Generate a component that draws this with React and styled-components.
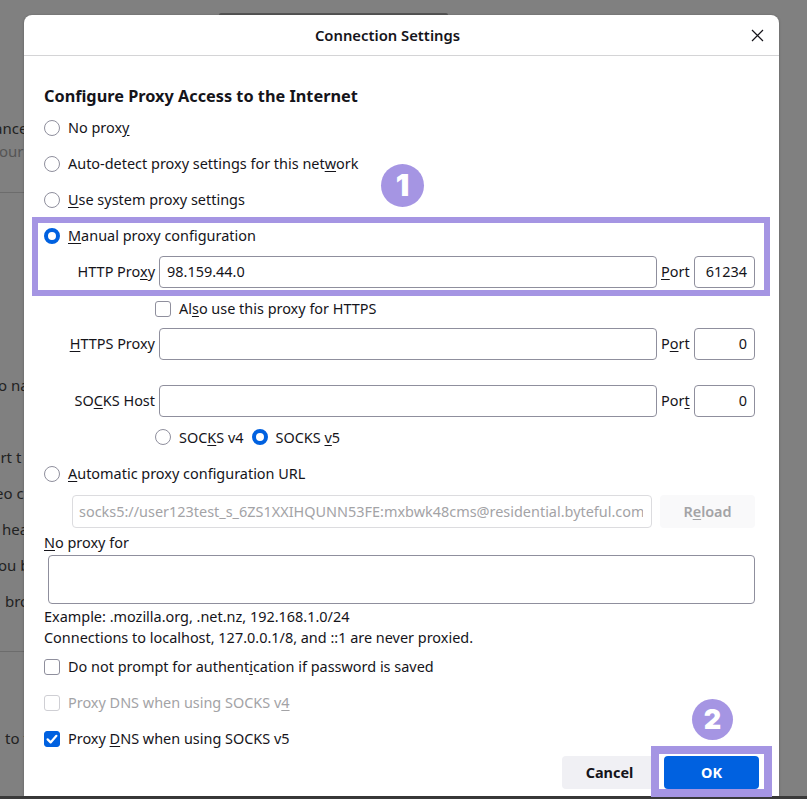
import styled, { createGlobalStyle } from "styled-components";

const Global = createGlobalStyle`
  html, body { margin: 0; padding: 0; }
  body { background: #808080; font-family: "Noto Sans", "Open Sans", sans-serif; }
`;

const Page = styled.div`
  position: relative;
  width: 807px;
  height: 799px;
  overflow: hidden;
  background: #808080;
`;

const Dialog = styled.div`
  position: absolute;
  left: 24px;
  top: 15px;
  width: 755px;
  height: 781px;
  background: #fff;
  border-radius: 8px 8px 0 0;
  box-shadow: -1px 0 2px rgba(0, 0, 0, 0.12), 1px 0 2px rgba(0, 0, 0, 0.12);
  display: flex;
  flex-direction: column;
  font-size: 14.45px;
  color: #15141a;
`;

const Header = styled.div`
  height: 41px;
  flex: none;
  display: flex;
  align-items: center;
  justify-content: center;
  position: relative;
  box-sizing: border-box;
  border-bottom: 1px solid #d4d4d6;
  font-weight: 600;
  font-size: 14.8px;
  padding: 0 28px 1px 0;
`;

const Close = styled.div`
  position: absolute;
  right: 15px;
  top: 14px;
  width: 13px;
  height: 13px;
  display: flex;
`;

const Body = styled.div`
  flex: 1;
  padding: 29px 24px 0 20px;
  display: flex;
  flex-direction: column;
`;

const Title = styled.h1`
  margin: 0;
  font-size: 16.3px;
  font-weight: 700;
  line-height: 22px;
`;

const Option = styled.div`
  display: flex;
  align-items: center;
  height: 20px;
  gap: 8px;
  margin-top: ${(p) => p.$top || 16}px;
  color: ${(p) => (p.$muted ? "#a3a3a6" : "inherit")};
`;

const Label = styled.span`
  padding-bottom: 2px;
`;

const Radio = styled.span`
  box-sizing: border-box;
  width: 16px;
  height: 16px;
  flex: none;
  border-radius: 50%;
  border: ${(p) => (p.$on ? "4px solid #0061e0" : "1px solid #8f8f9d")};
  background: #fff;
`;

const Check = styled.span`
  box-sizing: border-box;
  width: 16px;
  height: 16px;
  flex: none;
  border-radius: 3px;
  border: 1px solid ${(p) => (p.$on ? "#0061e0" : p.$muted ? "#cfcfd4" : "#8f8f9d")};
  background: ${(p) => (p.$on ? "#0061e0" : "#fff")};
  display: flex;
  align-items: center;
  justify-content: center;
`;

const Key = styled.span`
  text-decoration: underline;
  text-underline-offset: 2px;
`;

const Row = styled.div`
  display: flex;
  align-items: center;
  height: 32px;
  margin-top: ${(p) => p.$top || 0}px;
`;

const RowLabel = styled.span`
  width: 115px;
  flex: none;
  text-align: right;
  padding: 0 4px 1px 0;
  box-sizing: border-box;
  white-space: nowrap;
`;

const Field = styled.div`
  box-sizing: border-box;
  width: ${(p) => p.$width}px;
  height: 32px;
  flex: none;
  border: 1px solid #8f8f9d;
  border-radius: 4px;
  padding: 0 7px 1px;
  display: flex;
  align-items: center;
  justify-content: ${(p) => (p.$end ? "flex-end" : "flex-start")};
  background: #fff;
`;

const PortLabel = styled.span`
  width: 37px;
  flex: none;
  padding: 0 0 1px 4px;
  box-sizing: border-box;
`;

const Sub = styled.div`
  display: flex;
  align-items: center;
  gap: 8px;
  height: 20px;
  padding-left: 111px;
  margin-top: ${(p) => p.$top || 0}px;
`;

const SubLabel = styled.span`
  padding-bottom: ${(p) => p.$lift || 0}px;
`;

const UrlRow = styled.div`
  display: flex;
  align-items: center;
  margin-top: 11px;
  padding-left: 28px;
  gap: 8px;
`;

const UrlField = styled.div`
  box-sizing: border-box;
  width: 580px;
  height: 33px;
  border: 1px solid #dcdcdf;
  border-radius: 4px;
  padding: 0 8px 1px 6px;
  display: flex;
  align-items: center;
  color: #a3a3a6;
  overflow: hidden;
  white-space: nowrap;
`;

const UrlClip = styled.span`
  display: block;
  overflow: hidden;
`;

const ReloadButton = styled.div`
  box-sizing: border-box;
  width: 95px;
  height: 33px;
  padding-bottom: 1px;
  background: #f9f9fa;
  border-radius: 4px;
  display: flex;
  align-items: center;
  justify-content: center;
  color: #a3a3a6;
  font-weight: 600;
`;

const NoProxyLabel = styled.div`
  height: 20px;
  line-height: 20px;
  margin-top: 5px;
`;

const NoProxyBox = styled.div`
  box-sizing: border-box;
  width: 707px;
  height: 49px;
  margin: 2px 0 0 4px;
  border: 1px solid #8f8f9d;
  border-radius: 4px;
`;

const Hint = styled.div`
  line-height: 21px;
  white-space: nowrap;
  margin-top: ${(p) => p.$top || 0}px;
`;

const Footer = styled.div`
  display: flex;
  justify-content: flex-end;
  gap: 7px;
  margin: 7px -4px 0 0;
`;

const Button = styled.div`
  box-sizing: border-box;
  width: 95px;
  height: 33px;
  padding-bottom: 1px;
  border-radius: 4px;
  display: flex;
  align-items: center;
  justify-content: center;
  font-weight: 700;
  background: ${(p) => (p.$primary ? "#0061e0" : "#f0f0f4")};
  color: ${(p) => (p.$primary ? "#fff" : "#15141a")};
`;

const Highlight = styled.div`
  position: absolute;
  box-sizing: border-box;
  border: ${(p) => p.$border}px solid #a595e3;
  left: ${(p) => p.$left}px;
  top: ${(p) => p.$top}px;
  width: ${(p) => p.$width}px;
  height: ${(p) => p.$height}px;
  pointer-events: none;
`;

const Badge = styled.div`
  position: absolute;
  left: ${(p) => p.$left}px;
  top: ${(p) => p.$top}px;
  width: ${(p) => p.$size}px;
  height: ${(p) => p.$size}px;
  border-radius: 50%;
  background: #a595e3;
  color: #fff;
  font-family: Inter, sans-serif;
  font-weight: 900;
  font-size: ${(p) => p.$font}px;
  line-height: ${(p) => p.$size}px;
  text-align: center;
`;

const Backdrop = styled.div`
  font-size: 15px;
  line-height: 20px;
`;

const BackdropText = styled.div`
  position: absolute;
  left: ${(p) => p.$left}px;
  top: ${(p) => p.$top}px;
  white-space: nowrap;
  color: ${(p) => (p.$faint ? "#555" : "#222")};
`;

const BackdropRule = styled.div`
  position: absolute;
  left: 0;
  width: 24px;
  top: ${(p) => p.$top}px;
  height: 1px;
  background: #6c6c6c;
`;

const TopTab = styled.div`
  position: absolute;
  left: 219px;
  top: 13px;
  width: 229px;
  height: 2px;
  background: #555;
  border-radius: 3px 3px 0 0;
`;

const BottomBar = styled.div`
  position: absolute;
  left: 0;
  right: 0;
  bottom: 0;
  height: 3px;
  background: #3a3a3a;
`;

const XIcon = () => (
  <svg width="13" height="13" viewBox="0 0 13 13" fill="none" stroke="#15141a" strokeWidth="1.2">
    <path d="M1 1l11 11M12 1L1 12" />
  </svg>
);

const Tick = () => (
  <svg width="14" height="14" viewBox="0 0 14 14" fill="none" stroke="#fff" strokeWidth="2.2" strokeLinecap="round" strokeLinejoin="round">
    <path d="M2.6 7.4l3 3L11.4 3.8" />
  </svg>
);

export default function App() {
  return (
    <Page>
      <Global />
      <Backdrop>
        <BackdropText $left={-6} $top={118}>ance</BackdropText>
        <BackdropText $left={-1} $top={141} $faint>our c</BackdropText>
        <BackdropRule $top={192} />
        <BackdropText $left={-2} $top={375}>o na</BackdropText>
        <BackdropText $left={-8} $top={447}>art t</BackdropText>
        <BackdropText $left={-5} $top={483}>eo c</BackdropText>
        <BackdropText $left={2} $top={519}>hea</BackdropText>
        <BackdropText $left={-2} $top={555}>ou b</BackdropText>
        <BackdropText $left={5} $top={591}>bro</BackdropText>
        <BackdropRule $top={651} />
        <BackdropText $left={5} $top={728}>to t</BackdropText>
      </Backdrop>
      <TopTab />
      <BottomBar />
      <Dialog>
        <Header>
          Connection Settings
          <Close><XIcon /></Close>
        </Header>
        <Body>
          <Title>Configure Proxy Access to the Internet</Title>
          <Option $top={11}><Radio /><Label>No prox<Key>y</Key></Label></Option>
          <Option><Radio /><Label>Auto-detect proxy settings for this net<Key>w</Key>ork</Label></Option>
          <Option><Radio /><Label><Key>U</Key>se system proxy settings</Label></Option>
          <Option><Radio $on /><Label><Key>M</Key>anual proxy configuration</Label></Option>
          <Row $top={10}>
            <RowLabel>HTTP Pro<Key>x</Key>y</RowLabel>
            <Field $width={498}>98.159.44.0</Field>
            <PortLabel><Key>P</Key>ort</PortLabel>
            <Field $width={61} $end>61234</Field>
          </Row>
          <Sub $top={11}><Check /><SubLabel $lift={2}>Al<Key>s</Key>o use this proxy for HTTPS</SubLabel></Sub>
          <Row $top={9}>
            <RowLabel><Key>H</Key>TTPS Proxy</RowLabel>
            <Field $width={498} />
            <PortLabel>P<Key>o</Key>rt</PortLabel>
            <Field $width={61} $end>0</Field>
          </Row>
          <Row $top={25}>
            <RowLabel>SO<Key>C</Key>KS Host</RowLabel>
            <Field $width={498} />
            <PortLabel>Por<Key>t</Key></PortLabel>
            <Field $width={61} $end>0</Field>
          </Row>
          <Sub $top={10}>
            <Radio />
            <SubLabel>SOC<Key>K</Key>S v4</SubLabel>
            <Radio $on />
            <SubLabel>SOCKS <Key>v</Key>5</SubLabel>
          </Sub>
          <Option $top={17}><Radio /><Label><Key>A</Key>utomatic proxy configuration URL</Label></Option>
          <UrlRow>
            <UrlField><UrlClip>socks5://user123test_s_6ZS1XXIHQUNN53FE:mxbwk48cms@residential.byteful.com</UrlClip></UrlField>
            <ReloadButton><span>R<Key>e</Key>load</span></ReloadButton>
          </UrlRow>
          <NoProxyLabel><Key>N</Key>o proxy for</NoProxyLabel>
          <NoProxyBox />
          <Hint $top={2}>Example: .mozilla.org, .net.nz, 192.168.1.0/24</Hint>
          <Hint>Connections to localhost, 127.0.0.1/8, and ::1 are never proxied.</Hint>
          <Option $top={9}><Check /><Label>Do not prompt for authent<Key>i</Key>cation if password is saved</Label></Option>
          <Option $muted><Check $muted /><Label>Proxy DNS when using SOCKS v<Key>4</Key></Label></Option>
          <Option><Check $on><Tick /></Check><Label>Proxy <Key>D</Key>NS when using SOCKS v5</Label></Option>
          <Footer>
            <Button>Cancel</Button>
            <Button $primary>OK</Button>
          </Footer>
        </Body>
      </Dialog>
      <Highlight $border={6} $left={32} $top={217} $width={738} $height={79} />
      <Highlight $border={8} $left={651} $top={746} $width={121} $height={51} />
      <Badge $left={381} $top={164} $size={43} $font={30}>1</Badge>
      <Badge $left={692} $top={699} $size={41} $font={27}>2</Badge>
    </Page>
  );
}
